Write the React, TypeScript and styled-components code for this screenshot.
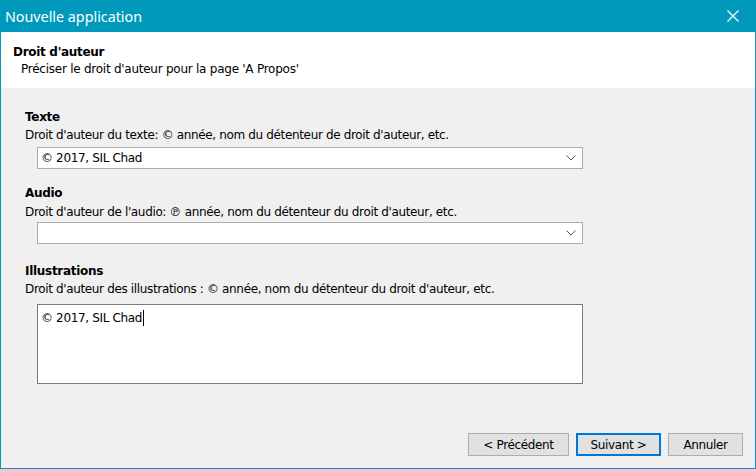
import styled, { createGlobalStyle } from 'styled-components';

const GlobalStyle = createGlobalStyle`
  html, body {
    margin: 0;
    padding: 0;
    background: #ffffff;
  }
  body {
    font-family: "DejaVu Sans", Verdana, sans-serif;
    font-size: 12px;
    letter-spacing: -0.35px;
    color: #000000;
  }
`;

const Window = styled.div`
  width: 756px;
  height: 469px;
  box-sizing: border-box;
  display: flex;
  flex-direction: column;
  border: 1px solid #0099bc;
  border-top: none;
  background: #f0f0f0;
`;

const TitleBar = styled.div`
  height: 32px;
  flex: 0 0 32px;
  margin: 0 -1px;
  padding: 0 0 0 5px;
  background: #0099bc;
  color: #ffffff;
  display: flex;
  align-items: center;
  justify-content: space-between;
`;

const TitleText = styled.span`
  font-family: "Noto Sans", "Open Sans", sans-serif;
  font-size: 14.3px;
  letter-spacing: 0;
  margin-top: 1px;
`;

const CloseButton = styled.button`
  width: 46px;
  height: 32px;
  border: none;
  background: transparent;
  display: flex;
  align-items: center;
  justify-content: center;
  padding: 0;
`;

const Header = styled.div`
  height: 56px;
  flex: 0 0 56px;
  box-sizing: border-box;
  background: #ffffff;
  padding: 12px 0 0 12px;
`;

const HeaderTitle = styled.div`
  font-weight: bold;
  letter-spacing: -0.3px;
  line-height: 16px;
`;

const HeaderSub = styled.div`
  line-height: 16px;
  letter-spacing: -0.25px;
  padding-left: 8px;
  margin-top: 1px;
`;

const Content = styled.div`
  flex: 1;
  padding: 21px 0 0 24px;
  display: flex;
  flex-direction: column;
`;

const Section = styled.section<{ $top: number }>`
  margin-top: ${p => p.$top}px;
  display: flex;
  flex-direction: column;
`;

const SectionTitle = styled.div`
  font-weight: bold;
  letter-spacing: -0.3px;
  line-height: 16px;
`;

const SectionLabel = styled.div<{ $gap: number }>`
  line-height: 16px;
  margin-top: ${p => p.$gap}px;
`;

const Combo = styled.div<{ $gap: number }>`
  margin: ${p => p.$gap}px 0 0 12px;
  width: 546px;
  height: 22px;
  box-sizing: border-box;
  border: 1px solid #adadad;
  background: #ffffff;
  display: flex;
  align-items: center;
  justify-content: space-between;
  padding: 0 6px 0 3px;
`;

const TextArea = styled.div<{ $gap: number }>`
  margin: ${p => p.$gap}px 0 0 12px;
  width: 546px;
  height: 80px;
  box-sizing: border-box;
  border: 1px solid #7a7a7a;
  background: #ffffff;
  padding: 5px 3px;
  line-height: 16px;
`;

const Caret = styled.span`
  display: inline-block;
  width: 1px;
  height: 16px;
  margin-left: 1px;
  background: #000000;
  vertical-align: top;
`;

const Footer = styled.div`
  display: flex;
  justify-content: flex-end;
  gap: 7px;
  padding: 0 12px 12px 0;
`;

const Button = styled.button<{ $w: number; $primary?: boolean }>`
  width: ${p => p.$w}px;
  height: 23px;
  box-sizing: border-box;
  background: #e1e1e1;
  border: ${p => (p.$primary ? '2px solid #0078d7' : '1px solid #adadad')};
  font-family: "DejaVu Sans", Verdana, sans-serif;
  font-size: 12px;
  letter-spacing: -0.35px;
  color: #000000;
  padding: 0;
`;

const Chevron = () => (
  <svg width="10" height="6" viewBox="0 0 10 6">
    <path d="M0.5 0.5 L5 5 L9.5 0.5" fill="none" stroke="#555555" strokeWidth="1" />
  </svg>
);

export default function App() {
  return (
    <>
      <GlobalStyle />
      <Window>
        <TitleBar>
          <TitleText>Nouvelle application</TitleText>
          <CloseButton aria-label="Fermer">
            <svg width="12" height="12" viewBox="0 0 12 12">
              <path d="M0.5 0.5 L11.5 11.5 M11.5 0.5 L0.5 11.5" stroke="#ffffff" strokeWidth="1.2" />
            </svg>
          </CloseButton>
        </TitleBar>
        <Header>
          <HeaderTitle>Droit d'auteur</HeaderTitle>
          <HeaderSub>Préciser le droit d'auteur pour la page 'A Propos'</HeaderSub>
        </Header>
        <Content>
          <Section $top={0}>
            <SectionTitle>Texte</SectionTitle>
            <SectionLabel $gap={2}>Droit d'auteur du texte: © année, nom du détenteur de droit d'auteur, etc.</SectionLabel>
            <Combo $gap={4}>
              <span>© 2017, SIL Chad</span>
              <Chevron />
            </Combo>
          </Section>
          <Section $top={16}>
            <SectionTitle>Audio</SectionTitle>
            <SectionLabel $gap={3}>Droit d'auteur de l'audio: ℗ année, nom du détenteur du droit d'auteur, etc.</SectionLabel>
            <Combo $gap={2}>
              <span />
              <Chevron />
            </Combo>
          </Section>
          <Section $top={19}>
            <SectionTitle>Illustrations</SectionTitle>
            <SectionLabel $gap={2}>Droit d'auteur des illustrations : © année, nom du détenteur du droit d'auteur, etc.</SectionLabel>
            <TextArea $gap={7}>
              © 2017, SIL Chad<Caret />
            </TextArea>
          </Section>
        </Content>
        <Footer>
          <Button $w={101}>&lt; Précédent</Button>
          <Button $w={85} $primary>Suivant &gt;</Button>
          <Button $w={75}>Annuler</Button>
        </Footer>
      </Window>
    </>
  );
}
